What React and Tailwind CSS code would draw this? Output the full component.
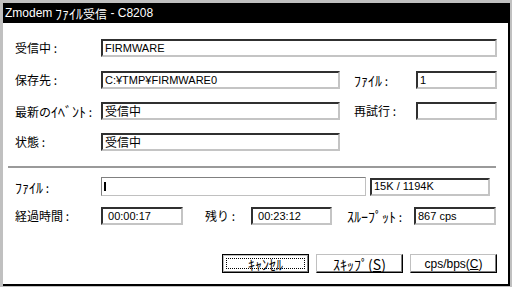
import React from "react";

const jp = { fontFamily: '"Noto Sans CJK JP", "Liberation Sans", sans-serif' };
const lat = { fontFamily: '"Liberation Sans", "Noto Sans CJK JP", sans-serif' };

// half-width katakana renders small in Noto, so bump it up a little
function Kana({ children }) {
  return <span className="text-[14px] leading-none">{children}</span>;
}

function Field({ w, children, latin }) {
  return (
    <div
      className={`${w} h-[18px] border-2 border-t-[#303030] border-l-[#303030] border-r-[#c4c4c4] border-b-[#c4c4c4] bg-white flex items-center pl-[2px] overflow-hidden whitespace-nowrap ${latin ? "text-[11px]" : "text-[12px]"} leading-none text-black`}
      style={latin ? lat : jp}
    >
      {children}
    </div>
  );
}

function Label({ w, children }) {
  return (
    <div className={`${w} shrink-0 text-[12px] leading-none text-black whitespace-nowrap`} style={jp}>
      {children}
    </div>
  );
}

function Button({ children, isDefault }) {
  if (isDefault) {
    return (
      <button className="w-[87px] h-[19px] border border-black bg-white p-0 flex">
        <div className="flex-1 border border-t-[#c0c0c0] border-l-[#c0c0c0] border-r-[#808080] border-b-[#808080] p-[2px] flex">
          <div className="flex-1 border border-dotted border-black flex items-center justify-center text-[14px] leading-none" style={jp}>
            {children}
          </div>
        </div>
      </button>
    );
  }
  return (
    <button className="w-[87px] h-[19px] border border-t-[#c0c0c0] border-l-[#c0c0c0] border-r-black border-b-black bg-white shadow-[inset_-1px_-1px_0_#808080] flex items-center justify-center p-0 leading-none">
      {children}
    </button>
  );
}

export default function App() {
  return (
    <div className="w-[512px] h-[287px] bg-[#c0c0c0] pt-[3px] pl-[3px] pr-[2px] pb-[1px] overflow-hidden">
      <div className="h-full bg-white border-r-2 border-b-2 border-black flex flex-col">
        {/* title bar */}
        <div className="h-[20px] bg-black text-white flex items-center pl-[2px] text-[12px] leading-none" style={jp}>
          <span style={lat}>Zmodem </span>
          <span>&nbsp;<Kana>ﾌｧｲﾙ</Kana>受信</span>
          <span style={lat}>&nbsp;- C8208</span>
        </div>

        <div className="flex items-center pl-[12px] mt-[16px]">
          <Label w="w-[86px]">受信中 :</Label>
          <Field w="w-[396px]" latin>FIRMWARE</Field>
        </div>

        <div className="flex items-center pl-[12px] mt-[14px]">
          <Label w="w-[86px]">保存先 :</Label>
          <Field w="w-[239px]" latin>C:¥TMP¥FIRMWARE0</Field>
          <Label w="w-[62px] ml-[14px]"><Kana>ﾌｧｲﾙ</Kana> :</Label>
          <Field w="w-[81px]" latin>1</Field>
        </div>

        <div className="flex items-center pl-[12px] mt-[13px]">
          <Label w="w-[86px]">最新の<Kana>ｲﾍﾞﾝﾄ</Kana> :</Label>
          <Field w="w-[239px]">受信中</Field>
          <Label w="w-[62px] ml-[14px]">再試行 :</Label>
          <Field w="w-[81px]" latin></Field>
        </div>

        <div className="flex items-center pl-[12px] mt-[13px]">
          <Label w="w-[86px]">状態 :</Label>
          <Field w="w-[239px]">受信中</Field>
        </div>

        <div className="ml-[5px] w-[488px] h-[2px] bg-[#9a9a9a] mt-[15px]" />

        <div className="flex items-center pl-[12px] mt-[9px]">
          <Label w="w-[86px]"><Kana>ﾌｧｲﾙ</Kana> :</Label>
          <div className="w-[265px] h-[19px] border border-t-[#808080] border-l-[#808080] border-r-[#c0c0c0] border-b-[#c0c0c0] bg-white flex items-center pl-[2px]">
            <div className="w-[2px] h-[9px] bg-black" />
          </div>
          <div className="ml-[4px]">
            <Field w="w-[120px]" latin>15K / 1194K</Field>
          </div>
        </div>

        <div className="flex items-center pl-[12px] mt-[11px]">
          <Label w="w-[86px]">経過時間 :</Label>
          <Field w="w-[82px]" latin>&nbsp;00:00:17</Field>
          <Label w="w-[46px] ml-[22px]">残り :</Label>
          <Field w="w-[81px]" latin>&nbsp;00:23:12</Field>
          <Label w="w-[67px] ml-[15px]"><Kana>ｽﾙｰﾌﾟｯﾄ</Kana> :</Label>
          <Field w="w-[82px]" latin>867 cps</Field>
        </div>

        <div className="flex justify-end gap-[7px] pr-[11px] mt-[29px]">
          <Button isDefault>ｷｬﾝｾﾙ</Button>
          <Button>
            <span className="text-[14px]" style={jp}>
              ｽｷｯﾌﾟ(<span className="underline">S</span>)
            </span>
          </Button>
          <Button>
            <span className="text-[12px]" style={lat}>
              cps/bps(<span className="underline">C</span>)
            </span>
          </Button>
        </div>
      </div>
    </div>
  );
}
